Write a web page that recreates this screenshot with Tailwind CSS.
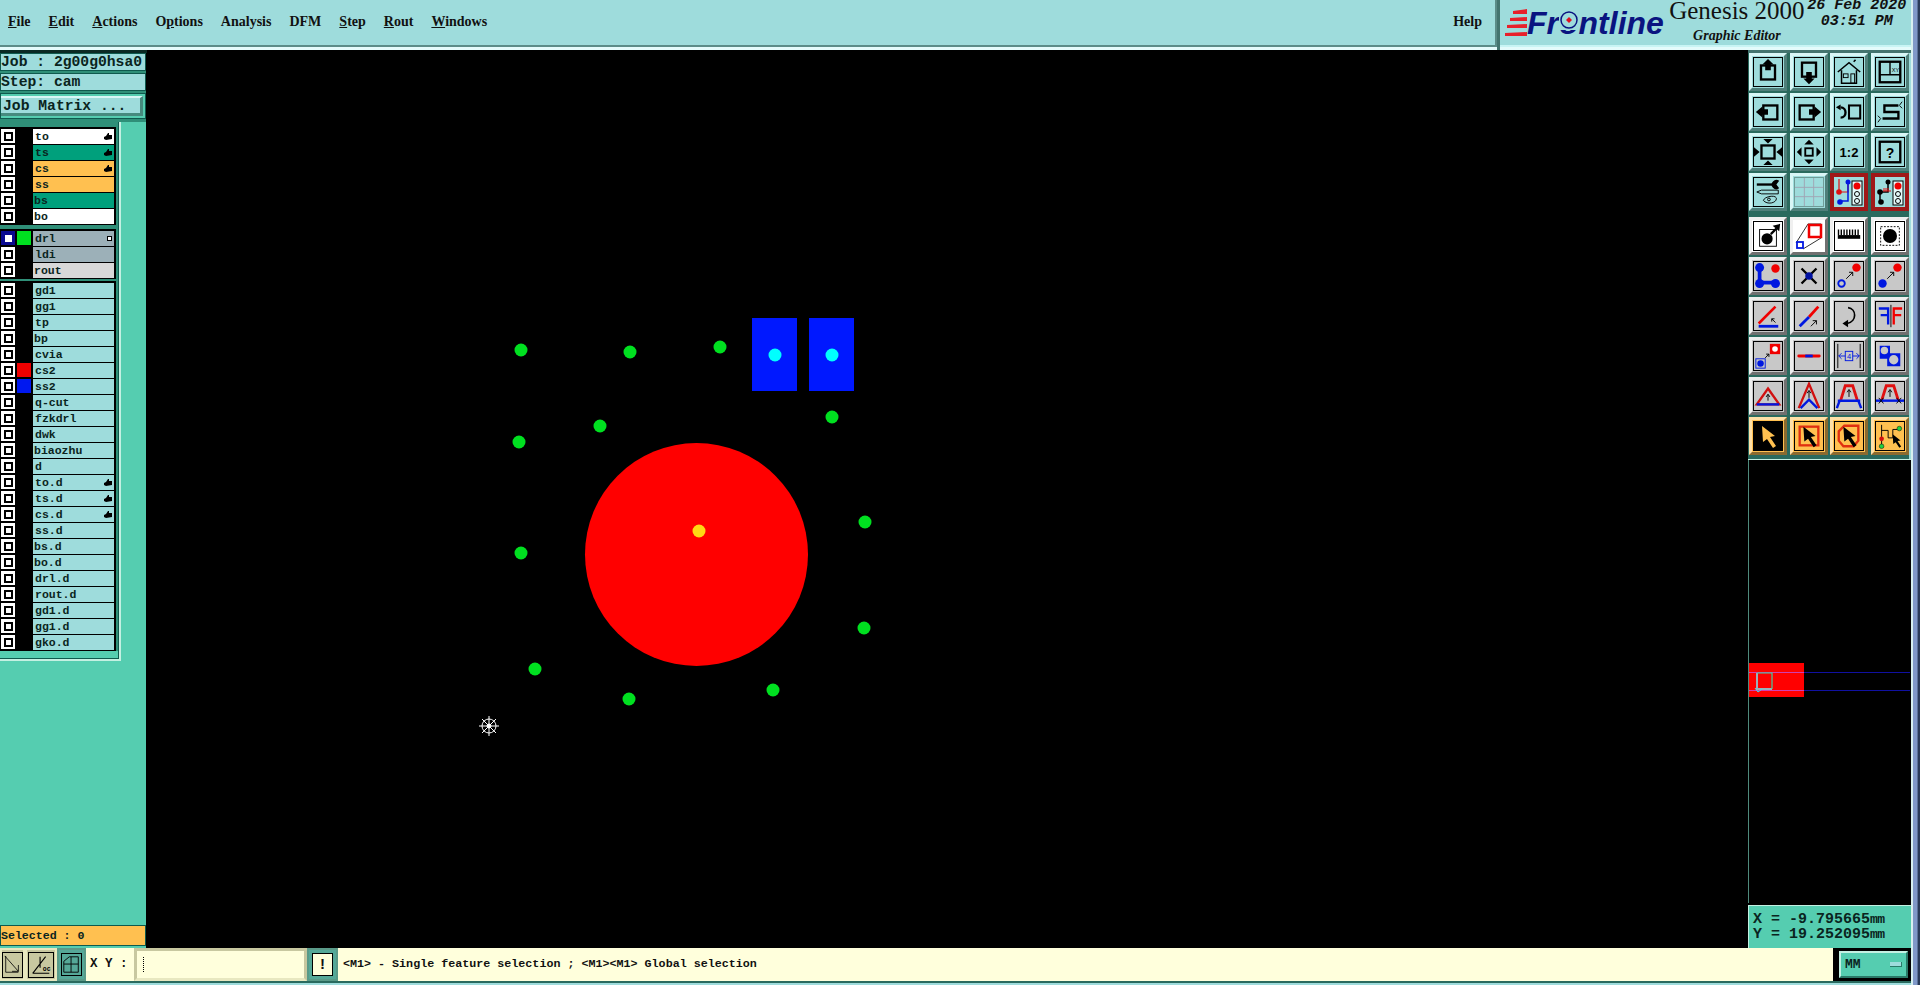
<!DOCTYPE html>
<html lang="en">
<head>
  <meta charset="UTF-8" />
  <title>Genesis 2000 Graphic Editor</title>
  <script src="https://cdn.jsdelivr.net/npm/@tailwindcss/browser@4"></script>
</head>
<body class="bg-black overflow-hidden font-['Liberation_Mono',monospace]">
  <svg class="hidden">
    <defs>
      <path id="hand" d="M1 5 L3 4 L5 1 L6 1 L6 3 L9 3 L9 7 L3 8 L1 7 Z" fill="#000" />
      <path id="pointer" d="M9 5 L22 15 L17 16 L23 25 L20 27 L14 18 L10 21 Z" />
    </defs>
  </svg>

  <div class="flex w-[1920px] h-[985px]">
    <div class="flex flex-col w-[1911px] h-[985px]">

      <!-- top bar -->
      <div class="flex h-[50px] bg-[#e4fbfb]">
        <div class="flex w-[1497px] h-[47px] bg-[#9edcdc] border-b-[2px] border-r-[2px] border-[#5b8c88] items-center justify-between px-2 pb-[2px] font-['Liberation_Serif',serif] font-bold text-[14px] text-[#111]">
          <div class="flex gap-[18px]">
            <span><span class="underline">F</span>ile</span>
            <span><span class="underline">E</span>dit</span>
            <span><span class="underline">A</span>ctions</span>
            <span>O<span class="underline">p</span>tions</span>
            <span>Analysis</span>
            <span>DFM</span>
            <span><span class="underline">S</span>tep</span>
            <span><span class="underline">R</span>out</span>
            <span><span class="underline">W</span>indows</span>
          </div>
          <span class="mr-[5px]">Help</span>
        </div>
        <div class="flex w-[3px] h-[50px] bg-[#43746f]"></div>
        <div class="flex flex-1 h-[47px] bg-[#9edcdc] pl-[5px] border-b-[2px] border-[#c8f4f4]">
          <svg class="w-[22px] h-[34px] mt-[8px]" viewBox="0 0 22 34">
            <path d="M22 1 L8 3 L8 6 L22 6 Z M22 9 L5 10 L5 13 L22 13 Z M22 16 L2 17 L2 20 L22 20 Z M22 24 L0 25 L0 28 L22 28 Z" fill="#e8202a" />
          </svg>
          <span class="font-['Liberation_Sans',sans-serif] font-bold italic text-[32px] leading-[47px] text-[#0a1480] relative">Fr<span class="relative">o<svg class="absolute left-[0px] top-[5px] w-[20px] h-[20px]" viewBox="0 0 20 20"><rect width="20" height="20" fill="#9edcdc" /><circle cx="10" cy="10" r="8" fill="none" stroke="#0a1480" stroke-width="1.5" /><path d="M10 7 L13 10 L10 13 L7 10 Z" fill="#e01020" /></svg></span>ntline</span>
          <div class="flex flex-col items-center w-[140px] ml-[3px] font-['Liberation_Serif',serif] text-[#111]">
            <span class="text-[25px] leading-[22px] whitespace-nowrap">Genesis 2000</span>
            <span class="text-[14px] leading-[18px] mt-[5px] font-bold italic">Graphic Editor</span>
          </div>
          <div class="flex flex-col items-center w-[100px] text-[15px] leading-[16px] font-bold italic text-[#111] mt-[-2px]">
            <span class="whitespace-nowrap">26 Feb 2020</span>
            <span>03:51 PM</span>
          </div>
        </div>
      </div>

      <div class="flex h-[898px]">
        <!-- left column -->
        <div class="flex flex-col w-[147px] h-[898px] bg-black text-[#0a2420]">
          <div class="h-[3px] bg-[#0a2a24]"></div>
          <div class="h-[18px] w-[146px] bg-[#9edcdc] border border-[#0f5a4e] font-bold text-[14.7px] leading-[16px] whitespace-nowrap overflow-hidden">Job : 2g00g0hsa0</div>
          <div class="h-[2px] w-[146px] bg-[#2f8f78]"></div>
          <div class="h-[18px] w-[146px] bg-[#9edcdc] border border-[#0f5a4e] font-bold text-[14.7px] leading-[16px] whitespace-nowrap overflow-hidden">Step: cam</div>
          <div class="h-[2px] w-[146px] bg-[#2f8f78]"></div>
          <div class="flex h-[26px] w-[146px] bg-[#55cdb0] border border-[#0f5a4e] pt-[2px] pr-[2px] pb-[2px]">
            <div class="w-[143px] h-[20px] bg-[#9edcdc] border-t-[2px] border-r-[3px] border-b-[3px] border-t-[#d8f6f6] border-r-[#468a7e] border-b-[#468a7e] font-bold text-[14.7px] leading-[16px] pl-[2px] whitespace-nowrap">Job Matrix ...</div>
          </div>
          <div class="h-[3px] w-[146px] bg-[#2f8f78]"></div>

          <div class="flex w-[146px] h-[539px] bg-[#55cdb0]">
            <div class="w-[121px] h-[539px] border-r-[2px] border-b-[2px] border-[#c4f0e2]">
              <div class="flex flex-col w-[119px] h-[537px] bg-[#2f8f78] pt-[5px] border-r-[1px] border-b-[1px] border-[#0f5a4e]">
                <div class="flex flex-col w-[116px] bg-black pt-[2px]">
                  <div class="flex h-[16px]"><div class="flex items-center justify-center w-[14px] h-[14px] ml-[1px] mr-[18px] bg-white"><div class="w-[9px] h-[9px] border-2 border-black"></div></div><div class="flex items-center justify-between w-[81px] h-[15px] bg-white pl-[2px] pr-[2px] font-bold text-[11.5px] leading-[15px]">to<svg class="w-[9px] h-[9px]"><use href="#hand" /></svg></div></div>
                  <div class="flex h-[16px]"><div class="flex items-center justify-center w-[14px] h-[14px] ml-[1px] mr-[18px] bg-white"><div class="w-[9px] h-[9px] border-2 border-black"></div></div><div class="flex items-center justify-between w-[81px] h-[15px] bg-[#00a07c] pl-[2px] pr-[2px] font-bold text-[11.5px] leading-[15px]">ts<svg class="w-[9px] h-[9px]"><use href="#hand" /></svg></div></div>
                  <div class="flex h-[16px]"><div class="flex items-center justify-center w-[14px] h-[14px] ml-[1px] mr-[18px] bg-white"><div class="w-[9px] h-[9px] border-2 border-black"></div></div><div class="flex items-center justify-between w-[81px] h-[15px] bg-[#ffc050] pl-[2px] pr-[2px] font-bold text-[11.5px] leading-[15px]">cs<svg class="w-[9px] h-[9px]"><use href="#hand" /></svg></div></div>
                  <div class="flex h-[16px]"><div class="flex items-center justify-center w-[14px] h-[14px] ml-[1px] mr-[18px] bg-white"><div class="w-[9px] h-[9px] border-2 border-black"></div></div><div class="w-[81px] h-[15px] bg-[#ffc050] pl-[2px] font-bold text-[11.5px] leading-[15px]">ss</div></div>
                  <div class="flex h-[16px]"><div class="flex items-center justify-center w-[14px] h-[14px] ml-[1px] mr-[18px] bg-white"><div class="w-[9px] h-[9px] border-2 border-black"></div></div><div class="w-[81px] h-[15px] bg-[#00a07c] pl-[1px] font-bold text-[11.5px] leading-[15px]">bs</div></div>
                  <div class="flex h-[16px]"><div class="flex items-center justify-center w-[14px] h-[14px] ml-[1px] mr-[18px] bg-white"><div class="w-[9px] h-[9px] border-2 border-black"></div></div><div class="w-[81px] h-[15px] bg-white pl-[1px] font-bold text-[11.5px] leading-[15px]">bo</div></div>
                </div>
                <div class="h-[4px]"></div>
                <div class="flex flex-col w-[116px] bg-black pt-[2px]">
                  <div class="flex h-[16px]"><div class="flex items-center justify-center w-[14px] h-[14px] ml-[1px] bg-[#0a0a90]"><div class="w-[7px] h-[7px] bg-white"></div></div><div class="w-[14px] h-[14px] ml-[2px] mr-[2px] bg-[#00e020]"></div><div class="flex items-center justify-between w-[81px] h-[15px] bg-[#9cb0b8] pl-[2px] pr-[2px] font-bold text-[11.5px] leading-[15px]">drl<div class="w-[5px] h-[5px] bg-white border border-black"></div></div></div>
                  <div class="flex h-[16px]"><div class="flex items-center justify-center w-[14px] h-[14px] ml-[1px] mr-[18px] bg-white"><div class="w-[9px] h-[9px] border-2 border-black"></div></div><div class="w-[81px] h-[15px] bg-[#9cb0b8] pl-[2px] font-bold text-[11.5px] leading-[15px]">ldi</div></div>
                  <div class="flex h-[16px]"><div class="flex items-center justify-center w-[14px] h-[14px] ml-[1px] mr-[18px] bg-white"><div class="w-[9px] h-[9px] border-2 border-black"></div></div><div class="w-[81px] h-[15px] bg-[#d8d8d8] pl-[1px] font-bold text-[11.5px] leading-[15px]">rout</div></div>
                </div>
                <div class="h-[2px]"></div>
                <div class="flex flex-col w-[116px] bg-black pt-[2px]">
                  <div class="flex h-[16px]"><div class="flex items-center justify-center w-[14px] h-[14px] ml-[1px] mr-[18px] bg-white"><div class="w-[9px] h-[9px] border-2 border-black"></div></div><div class="w-[81px] h-[15px] bg-[#9edcdc] pl-[2px] font-bold text-[11.5px] leading-[15px]">gd1</div></div>
                  <div class="flex h-[16px]"><div class="flex items-center justify-center w-[14px] h-[14px] ml-[1px] mr-[18px] bg-white"><div class="w-[9px] h-[9px] border-2 border-black"></div></div><div class="w-[81px] h-[15px] bg-[#9edcdc] pl-[2px] font-bold text-[11.5px] leading-[15px]">gg1</div></div>
                  <div class="flex h-[16px]"><div class="flex items-center justify-center w-[14px] h-[14px] ml-[1px] mr-[18px] bg-white"><div class="w-[9px] h-[9px] border-2 border-black"></div></div><div class="w-[81px] h-[15px] bg-[#9edcdc] pl-[2px] font-bold text-[11.5px] leading-[15px]">tp</div></div>
                  <div class="flex h-[16px]"><div class="flex items-center justify-center w-[14px] h-[14px] ml-[1px] mr-[18px] bg-white"><div class="w-[9px] h-[9px] border-2 border-black"></div></div><div class="w-[81px] h-[15px] bg-[#9edcdc] pl-[1px] font-bold text-[11.5px] leading-[15px]">bp</div></div>
                  <div class="flex h-[16px]"><div class="flex items-center justify-center w-[14px] h-[14px] ml-[1px] mr-[18px] bg-white"><div class="w-[9px] h-[9px] border-2 border-black"></div></div><div class="w-[81px] h-[15px] bg-[#9edcdc] pl-[2px] font-bold text-[11.5px] leading-[15px]">cvia</div></div>
                  <div class="flex h-[16px]"><div class="flex items-center justify-center w-[14px] h-[14px] ml-[1px] bg-white"><div class="w-[9px] h-[9px] border-2 border-black"></div></div><div class="w-[14px] h-[14px] ml-[2px] mr-[2px] bg-[#f00000]"></div><div class="w-[81px] h-[15px] bg-[#9edcdc] pl-[2px] font-bold text-[11.5px] leading-[15px]">cs2</div></div>
                  <div class="flex h-[16px]"><div class="flex items-center justify-center w-[14px] h-[14px] ml-[1px] bg-white"><div class="w-[9px] h-[9px] border-2 border-black"></div></div><div class="w-[14px] h-[14px] ml-[2px] mr-[2px] bg-[#0018f0]"></div><div class="w-[81px] h-[15px] bg-[#9edcdc] pl-[2px] font-bold text-[11.5px] leading-[15px]">ss2</div></div>
                  <div class="flex h-[16px]"><div class="flex items-center justify-center w-[14px] h-[14px] ml-[1px] mr-[18px] bg-white"><div class="w-[9px] h-[9px] border-2 border-black"></div></div><div class="w-[81px] h-[15px] bg-[#9edcdc] pl-[2px] font-bold text-[11.5px] leading-[15px]">q-cut</div></div>
                  <div class="flex h-[16px]"><div class="flex items-center justify-center w-[14px] h-[14px] ml-[1px] mr-[18px] bg-white"><div class="w-[9px] h-[9px] border-2 border-black"></div></div><div class="w-[81px] h-[15px] bg-[#9edcdc] pl-[2px] font-bold text-[11.5px] leading-[15px]">fzkdrl</div></div>
                  <div class="flex h-[16px]"><div class="flex items-center justify-center w-[14px] h-[14px] ml-[1px] mr-[18px] bg-white"><div class="w-[9px] h-[9px] border-2 border-black"></div></div><div class="w-[81px] h-[15px] bg-[#9edcdc] pl-[2px] font-bold text-[11.5px] leading-[15px]">dwk</div></div>
                  <div class="flex h-[16px]"><div class="flex items-center justify-center w-[14px] h-[14px] ml-[1px] mr-[18px] bg-white"><div class="w-[9px] h-[9px] border-2 border-black"></div></div><div class="w-[81px] h-[15px] bg-[#9edcdc] pl-[1px] font-bold text-[11.5px] leading-[15px]">biaozhu</div></div>
                  <div class="flex h-[16px]"><div class="flex items-center justify-center w-[14px] h-[14px] ml-[1px] mr-[18px] bg-white"><div class="w-[9px] h-[9px] border-2 border-black"></div></div><div class="w-[81px] h-[15px] bg-[#9edcdc] pl-[2px] font-bold text-[11.5px] leading-[15px]">d</div></div>
                  <div class="flex h-[16px]"><div class="flex items-center justify-center w-[14px] h-[14px] ml-[1px] mr-[18px] bg-white"><div class="w-[9px] h-[9px] border-2 border-black"></div></div><div class="flex items-center justify-between w-[81px] h-[15px] bg-[#9edcdc] pl-[2px] pr-[2px] font-bold text-[11.5px] leading-[15px]">to.d<svg class="w-[9px] h-[9px]"><use href="#hand" /></svg></div></div>
                  <div class="flex h-[16px]"><div class="flex items-center justify-center w-[14px] h-[14px] ml-[1px] mr-[18px] bg-white"><div class="w-[9px] h-[9px] border-2 border-black"></div></div><div class="flex items-center justify-between w-[81px] h-[15px] bg-[#9edcdc] pl-[2px] pr-[2px] font-bold text-[11.5px] leading-[15px]">ts.d<svg class="w-[9px] h-[9px]"><use href="#hand" /></svg></div></div>
                  <div class="flex h-[16px]"><div class="flex items-center justify-center w-[14px] h-[14px] ml-[1px] mr-[18px] bg-white"><div class="w-[9px] h-[9px] border-2 border-black"></div></div><div class="flex items-center justify-between w-[81px] h-[15px] bg-[#9edcdc] pl-[2px] pr-[2px] font-bold text-[11.5px] leading-[15px]">cs.d<svg class="w-[9px] h-[9px]"><use href="#hand" /></svg></div></div>
                  <div class="flex h-[16px]"><div class="flex items-center justify-center w-[14px] h-[14px] ml-[1px] mr-[18px] bg-white"><div class="w-[9px] h-[9px] border-2 border-black"></div></div><div class="w-[81px] h-[15px] bg-[#9edcdc] pl-[2px] font-bold text-[11.5px] leading-[15px]">ss.d</div></div>
                  <div class="flex h-[16px]"><div class="flex items-center justify-center w-[14px] h-[14px] ml-[1px] mr-[18px] bg-white"><div class="w-[9px] h-[9px] border-2 border-black"></div></div><div class="w-[81px] h-[15px] bg-[#9edcdc] pl-[1px] font-bold text-[11.5px] leading-[15px]">bs.d</div></div>
                  <div class="flex h-[16px]"><div class="flex items-center justify-center w-[14px] h-[14px] ml-[1px] mr-[18px] bg-white"><div class="w-[9px] h-[9px] border-2 border-black"></div></div><div class="w-[81px] h-[15px] bg-[#9edcdc] pl-[1px] font-bold text-[11.5px] leading-[15px]">bo.d</div></div>
                  <div class="flex h-[16px]"><div class="flex items-center justify-center w-[14px] h-[14px] ml-[1px] mr-[18px] bg-white"><div class="w-[9px] h-[9px] border-2 border-black"></div></div><div class="w-[81px] h-[15px] bg-[#9edcdc] pl-[2px] font-bold text-[11.5px] leading-[15px]">drl.d</div></div>
                  <div class="flex h-[16px]"><div class="flex items-center justify-center w-[14px] h-[14px] ml-[1px] mr-[18px] bg-white"><div class="w-[9px] h-[9px] border-2 border-black"></div></div><div class="w-[81px] h-[15px] bg-[#9edcdc] pl-[2px] font-bold text-[11.5px] leading-[15px]">rout.d</div></div>
                  <div class="flex h-[16px]"><div class="flex items-center justify-center w-[14px] h-[14px] ml-[1px] mr-[18px] bg-white"><div class="w-[9px] h-[9px] border-2 border-black"></div></div><div class="w-[81px] h-[15px] bg-[#9edcdc] pl-[2px] font-bold text-[11.5px] leading-[15px]">gd1.d</div></div>
                  <div class="flex h-[16px]"><div class="flex items-center justify-center w-[14px] h-[14px] ml-[1px] mr-[18px] bg-white"><div class="w-[9px] h-[9px] border-2 border-black"></div></div><div class="w-[81px] h-[15px] bg-[#9edcdc] pl-[2px] font-bold text-[11.5px] leading-[15px]">gg1.d</div></div>
                  <div class="flex h-[16px]"><div class="flex items-center justify-center w-[14px] h-[14px] ml-[1px] mr-[18px] bg-white"><div class="w-[9px] h-[9px] border-2 border-black"></div></div><div class="w-[81px] h-[15px] bg-[#9edcdc] pl-[2px] font-bold text-[11.5px] leading-[15px]">gko.d</div></div>
                </div>
                <div class="flex-1 w-[118px] bg-[#55cdb0]"></div>
              </div>
            </div>
          </div>

          <div class="h-[264px] w-[146px] bg-[#55cdb0]"></div>
          <div class="h-[21px] w-[146px] bg-[#ffc050] border-[1px] border-[#0f5a4e] font-bold text-[11.6px] leading-[19px] whitespace-nowrap">Selected : 0</div>
          <div class="h-[2px] w-[146px] bg-[#55cdb0]"></div>
        </div>

        <!-- canvas -->
        <svg class="w-[1600px] h-[898px] bg-black" viewBox="147 50 1600 898">
          <circle cx="696.5" cy="554.5" r="111.5" fill="#ff0000" />
          <circle cx="699" cy="531" r="6.5" fill="#ffd814" />
          <rect x="752" y="318" width="45" height="73" fill="#0018ff" />
          <rect x="809" y="318" width="45" height="73" fill="#0018ff" />
          <circle cx="775" cy="355" r="6.5" fill="#00ffff" />
          <circle cx="832" cy="355" r="6.5" fill="#00ffff" />
          <g fill="#00e020">
            <circle cx="521" cy="350" r="6.5" />
            <circle cx="630" cy="352" r="6.5" />
            <circle cx="720" cy="347" r="6.5" />
            <circle cx="832" cy="417" r="6.5" />
            <circle cx="600" cy="426" r="6.5" />
            <circle cx="519" cy="442" r="6.5" />
            <circle cx="865" cy="522" r="6.5" />
            <circle cx="521" cy="553" r="6.5" />
            <circle cx="864" cy="628" r="6.5" />
            <circle cx="535" cy="669" r="6.5" />
            <circle cx="629" cy="699" r="6.5" />
            <circle cx="773" cy="690" r="6.5" />
          </g>
          <g stroke="#fff" stroke-width="1" fill="none">
            <path d="M489 716 V736 M479 726 H499 M482 719 L496 733 M496 719 L482 733" />
            <circle cx="489" cy="726" r="7" />
            <circle cx="489" cy="726" r="2" fill="#fff" />
          </g>
        </svg>

        <!-- right column -->
        <div class="flex flex-col w-[164px] h-[898px] bg-black pl-[1px]">
          <div class="h-[3px] bg-[#43746f]"></div>
          <div class="grid grid-cols-4 gap-[2px] w-[163px] pl-[1px] pb-[6px] bg-[#2a6a5e] border-r-[2px] border-[#9edcdc]">
            <div class="flex items-center justify-center w-[38px] h-[38px] bg-[#9edcdc] border-[3px] border-t-[#d8f6f6] border-l-[#d8f6f6] border-r-[#4f7f7a] border-b-[#4f7f7a]"><svg class="w-[30px] h-[30px] shrink-0 border border-black" viewBox="0 0 30 30"><rect x="7.5" y="8" width="15" height="15" fill="none" stroke="#000" stroke-width="2.5" /><path d="M15 1 L21 7 L18 7 L18 13 L12 13 L12 7 L9 7 Z" /></svg></div>
            <div class="flex items-center justify-center w-[38px] h-[38px] bg-[#9edcdc] border-[3px] border-t-[#d8f6f6] border-l-[#d8f6f6] border-r-[#4f7f7a] border-b-[#4f7f7a]"><svg class="w-[30px] h-[30px] shrink-0 border border-black" viewBox="0 0 30 30"><rect x="7.5" y="5" width="15" height="15" fill="none" stroke="#000" stroke-width="2.5" /><path d="M15 28 L21 22 L18 22 L18 15 L12 15 L12 22 L9 22 Z" /></svg></div>
            <div class="flex items-center justify-center w-[38px] h-[38px] bg-[#9edcdc] border-[3px] border-t-[#d8f6f6] border-l-[#d8f6f6] border-r-[#4f7f7a] border-b-[#4f7f7a]"><svg class="w-[30px] h-[30px] shrink-0 border border-black" viewBox="0 0 30 30"><path d="M3 15 L15 5 L27 15 M7 13 V27 H23 V13 M20 4 L22 2" fill="none" stroke="#000" stroke-width="1.6" /><rect x="9" y="17" width="5" height="4" fill="none" stroke="#000" /><rect x="17" y="17" width="4" height="10" fill="none" stroke="#000" /></svg></div>
            <div class="flex items-center justify-center w-[38px] h-[38px] bg-[#9edcdc] border-[3px] border-t-[#d8f6f6] border-l-[#d8f6f6] border-r-[#4f7f7a] border-b-[#4f7f7a]"><svg class="w-[30px] h-[30px] shrink-0 border border-black" viewBox="0 0 30 30"><rect x="4" y="4" width="22" height="22" fill="none" stroke="#000" stroke-width="2.5" /><path d="M15 4 V18 M4 18 H26" stroke="#000" stroke-width="1.5" /><text x="17" y="15" font-size="6" font-family="Liberation Sans">XY</text></svg></div>

            <div class="flex items-center justify-center w-[38px] h-[38px] bg-[#9edcdc] border-[3px] border-t-[#d8f6f6] border-l-[#d8f6f6] border-r-[#4f7f7a] border-b-[#4f7f7a]"><svg class="w-[30px] h-[30px] shrink-0 border border-black" viewBox="0 0 30 30"><rect x="10" y="8" width="15" height="15" fill="none" stroke="#000" stroke-width="2.5" /><path d="M2 15 L9 9 L9 12 L15 12 L15 18 L9 18 L9 21 Z" /></svg></div>
            <div class="flex items-center justify-center w-[38px] h-[38px] bg-[#9edcdc] border-[3px] border-t-[#d8f6f6] border-l-[#d8f6f6] border-r-[#4f7f7a] border-b-[#4f7f7a]"><svg class="w-[30px] h-[30px] shrink-0 border border-black" viewBox="0 0 30 30"><rect x="5" y="8" width="15" height="15" fill="none" stroke="#000" stroke-width="2.5" /><path d="M28 15 L21 9 L21 12 L15 12 L15 18 L21 18 L21 21 Z" /></svg></div>
            <div class="flex items-center justify-center w-[38px] h-[38px] bg-[#9edcdc] border-[3px] border-t-[#d8f6f6] border-l-[#d8f6f6] border-r-[#4f7f7a] border-b-[#4f7f7a]"><svg class="w-[30px] h-[30px] shrink-0 border border-black" viewBox="0 0 30 30"><rect x="15" y="8" width="12" height="14" fill="none" stroke="#000" stroke-width="2.2" /><path d="M6 21 C13 21 13 10 6 10" fill="none" stroke="#000" stroke-width="2.5" /><path d="M1 10 L6 7 L6 13 Z" /></svg></div>
            <div class="flex items-center justify-center w-[38px] h-[38px] bg-[#9edcdc] border-[3px] border-t-[#d8f6f6] border-l-[#d8f6f6] border-r-[#4f7f7a] border-b-[#4f7f7a]"><svg class="w-[30px] h-[30px] shrink-0 border border-black" viewBox="0 0 30 30"><path d="M24 8 H9 V15 H24 V22 H7" fill="none" stroke="#000" stroke-width="2.5" /><path d="M28 4 L25 8 L28 11 M2 19 L5 22 L2 26" fill="none" stroke="#000" /></svg></div>

            <div class="flex items-center justify-center w-[38px] h-[38px] bg-[#9edcdc] border-[3px] border-t-[#d8f6f6] border-l-[#d8f6f6] border-r-[#4f7f7a] border-b-[#4f7f7a]"><svg class="w-[30px] h-[30px] shrink-0 border border-black" viewBox="0 0 30 30"><rect x="8" y="8" width="14" height="14" fill="none" stroke="#000" stroke-width="2.5" /><path d="M10 1 H20 L15 6 Z M10 29 H20 L15 24 Z M0 10 L6 15 L0 20 Z M30 10 L24 15 L30 20 Z" /></svg></div>
            <div class="flex items-center justify-center w-[38px] h-[38px] bg-[#9edcdc] border-[3px] border-t-[#d8f6f6] border-l-[#d8f6f6] border-r-[#4f7f7a] border-b-[#4f7f7a]"><svg class="w-[30px] h-[30px] shrink-0 border border-black" viewBox="0 0 30 30"><rect x="11" y="11" width="8" height="8" fill="none" stroke="#000" stroke-width="2" /><path d="M15 2 L20 7 H10 Z M15 28 L20 23 H10 Z M2 15 L7 10 V20 Z M28 15 L23 10 V20 Z" /></svg></div>
            <div class="flex items-center justify-center w-[38px] h-[38px] bg-[#9edcdc] border-[3px] border-t-[#d8f6f6] border-l-[#d8f6f6] border-r-[#4f7f7a] border-b-[#4f7f7a]"><svg class="w-[30px] h-[30px] shrink-0 border border-black" viewBox="0 0 30 30"><text x="15" y="20" font-size="14" font-weight="bold" text-anchor="middle" font-family="Liberation Sans">1:2</text></svg></div>
            <div class="flex items-center justify-center w-[38px] h-[38px] bg-[#9edcdc] border-[3px] border-t-[#d8f6f6] border-l-[#d8f6f6] border-r-[#4f7f7a] border-b-[#4f7f7a]"><svg class="w-[30px] h-[30px] shrink-0 border border-black" viewBox="0 0 30 30"><rect x="4" y="4" width="22" height="22" fill="none" stroke="#000" stroke-width="2.5" /><text x="15" y="21" font-size="15" font-weight="bold" text-anchor="middle" font-family="Liberation Sans">?</text></svg></div>

            <div class="flex items-center justify-center w-[38px] h-[38px] bg-[#9edcdc] border-[3px] border-t-[#d8f6f6] border-l-[#d8f6f6] border-r-[#4f7f7a] border-b-[#4f7f7a]"><svg class="w-[30px] h-[30px] shrink-0 border border-black" viewBox="0 0 30 30"><path d="M3 7 H20" stroke="#000" stroke-width="2.5" /><path d="M27 3 A5 5 0 1 0 27 11 L24 7 Z" /><path d="M3 15 L8 13 H26 V17 H8 Z" fill="none" stroke="#000" /><path d="M10 24 C12 19 24 18 24 22 C24 27 14 29 10 24 Z" fill="none" stroke="#000" /><circle cx="16" cy="23" r="1.5" fill="none" stroke="#000" /></svg></div>
            <div class="flex items-center justify-center w-[38px] h-[38px] bg-[#9edcdc] border-[3px] border-t-[#d8f6f6] border-l-[#d8f6f6] border-r-[#4f7f7a] border-b-[#4f7f7a]"><svg class="w-[30px] h-[30px] shrink-0 border border-[#6f9c98]" viewBox="0 0 30 30"><path d="M10 0 V30 M20 0 V30 M0 10 H30 M0 20 H30" stroke="#a0a4b4" /></svg></div>
            <div class="flex items-center justify-center w-[38px] h-[38px] bg-[#e4fbfb] border-[4px] border-[#a01818]"><svg class="w-[30px] h-[30px] shrink-0 bg-[#9edcdc]" viewBox="0 0 30 30"><path d="M3 15 H14 V4 M5 15 V2" fill="none" stroke="#e01010" stroke-width="1.2" /><path d="M14 6 V24 H6" fill="none" stroke="#0018e0" stroke-width="1.5" /><circle cx="14" cy="5" r="2.5" fill="#0018e0" /><circle cx="5" cy="15" r="2.8" fill="#e01010" /><circle cx="6" cy="25" r="2.8" fill="#0018e0" /><rect x="18" y="4" width="10" height="24" fill="#e4fbfb" stroke="#000" /><circle cx="23" cy="9" r="3.5" fill="#f00000" /><circle cx="23" cy="17" r="2.5" fill="none" stroke="#000" /><circle cx="23" cy="24" r="2.5" fill="none" stroke="#000" /></svg></div>
            <div class="flex items-center justify-center w-[38px] h-[38px] bg-[#e4fbfb] border-[4px] border-[#a01818]"><svg class="w-[30px] h-[30px] shrink-0 bg-[#9edcdc]" viewBox="0 0 30 30"><path d="M13 5 V15 H5 V25" fill="none" stroke="#000" stroke-width="1.5" /><path d="M9 14 V11 M11 14 V11 M13 14 V11 M8 14 H16" stroke="#e01010" /><circle cx="13" cy="5" r="2.5" /><circle cx="5" cy="15" r="2.8" /><circle cx="6" cy="25" r="2.8" /><rect x="18" y="4" width="10" height="24" fill="#e4fbfb" stroke="#000" /><circle cx="23" cy="9" r="3.5" fill="#f00000" /><circle cx="23" cy="17" r="2.5" fill="none" stroke="#000" /><circle cx="23" cy="24" r="2.5" fill="none" stroke="#000" /></svg></div>
          </div>

          <div class="grid grid-cols-4 gap-[2px] w-[163px] pl-[1px] pb-[4px] bg-[#2a6a5e] border-r-[2px] border-[#9edcdc]">
            <div class="flex items-center justify-center w-[38px] h-[38px] bg-white border-[3px] border-t-[#f0f0f0] border-l-[#f0f0f0] border-r-[#707070] border-b-[#707070]"><svg class="w-[30px] h-[30px] shrink-0 border border-black" viewBox="0 0 30 30"><rect x="6" y="8" width="18" height="18" fill="none" stroke="#000" /><circle cx="14" cy="18" r="6" /><path d="M18 13 L24 7" stroke="#000" stroke-width="2.5" /><path d="M28 2 L27 10 L20 4 Z" /></svg></div>
            <div class="flex items-center justify-center w-[38px] h-[38px] bg-white border-[3px] border-t-[#f0f0f0] border-l-[#f0f0f0] border-r-[#707070] border-b-[#707070]"><svg class="w-[30px] h-[30px] shrink-0" viewBox="0 0 30 30"><path d="M2 22 L14 3 H27 M9 28 L27 17" fill="none" stroke="#000" stroke-width="0.8" /><rect x="15" y="4" width="12" height="12" fill="#fff" stroke="#f00000" stroke-width="2.5" /><rect x="3" y="21" width="6" height="6" fill="#fff" stroke="#0018e0" stroke-width="1.8" /></svg></div>
            <div class="flex items-center justify-center w-[38px] h-[38px] bg-white border-[3px] border-t-[#f0f0f0] border-l-[#f0f0f0] border-r-[#707070] border-b-[#707070]"><svg class="w-[30px] h-[30px] shrink-0 border border-black" viewBox="0 0 30 30"><rect x="3" y="14" width="24" height="4" /><path d="M3 11 H27" stroke="#000" stroke-width="6" stroke-dasharray="1.5 1.5" /></svg></div>
            <div class="flex items-center justify-center w-[38px] h-[38px] bg-white border-[3px] border-t-[#f0f0f0] border-l-[#f0f0f0] border-r-[#707070] border-b-[#707070]"><svg class="w-[30px] h-[30px] shrink-0 border border-black" viewBox="0 0 30 30"><rect x="5" y="5" width="20" height="20" fill="none" stroke="#000" stroke-dasharray="2 1.5" /><circle cx="15" cy="15" r="7.5" /></svg></div>

            <div class="flex items-center justify-center w-[38px] h-[38px] bg-[#c8c8c8] border-[3px] border-t-[#efefef] border-l-[#efefef] border-r-[#707070] border-b-[#707070]"><svg class="w-[30px] h-[30px] shrink-0 border border-black" viewBox="0 0 30 30"><path d="M6 6 V22 H24" fill="none" stroke="#0018e0" stroke-width="4" /><circle cx="6" cy="6" r="4.8" fill="#0018e0" /><circle cx="6" cy="23" r="4.8" fill="#0018e0" /><circle cx="23" cy="23" r="4.8" fill="#0018e0" /><circle cx="23" cy="7" r="4.5" fill="#f00000" /></svg></div>
            <div class="flex items-center justify-center w-[38px] h-[38px] bg-[#c8c8c8] border-[3px] border-t-[#efefef] border-l-[#efefef] border-r-[#707070] border-b-[#707070]"><svg class="w-[30px] h-[30px] shrink-0 border border-black" viewBox="0 0 30 30"><path d="M7 7 L23 23 M23 7 L7 23" stroke="#000" stroke-width="2.5" /><circle cx="15" cy="15" r="4" fill="#0010a0" /></svg></div>
            <div class="flex items-center justify-center w-[38px] h-[38px] bg-[#c8c8c8] border-[3px] border-t-[#efefef] border-l-[#efefef] border-r-[#707070] border-b-[#707070]"><svg class="w-[30px] h-[30px] shrink-0 border border-black" viewBox="0 0 30 30"><circle cx="7" cy="23" r="3.5" fill="none" stroke="#0018e0" stroke-width="2" /><path d="M12 18 L19 11 M15 11 H19 V15" fill="none" stroke="#000" /><circle cx="23" cy="6" r="4.5" fill="#f00000" /></svg></div>
            <div class="flex items-center justify-center w-[38px] h-[38px] bg-[#c8c8c8] border-[3px] border-t-[#efefef] border-l-[#efefef] border-r-[#707070] border-b-[#707070]"><svg class="w-[30px] h-[30px] shrink-0 border border-black" viewBox="0 0 30 30"><circle cx="7" cy="23" r="4.5" fill="#0018e0" /><path d="M12 18 L19 11 M15 11 H19 V15" fill="none" stroke="#000" /><circle cx="23" cy="6" r="4.5" fill="#f00000" /></svg></div>

            <div class="flex items-center justify-center w-[38px] h-[38px] bg-[#c8c8c8] border-[3px] border-t-[#efefef] border-l-[#efefef] border-r-[#707070] border-b-[#707070]"><svg class="w-[30px] h-[30px] shrink-0 border border-black" viewBox="0 0 30 30"><path d="M5 23 L23 5" stroke="#f00000" stroke-width="2.8" /><path d="M5 26 H26" stroke="#0018e0" stroke-width="3" /><path d="M19 18 L23 22 M19 18 H22 M19 18 V21" stroke="#000" fill="none" /></svg></div>
            <div class="flex items-center justify-center w-[38px] h-[38px] bg-[#c8c8c8] border-[3px] border-t-[#efefef] border-l-[#efefef] border-r-[#707070] border-b-[#707070]"><svg class="w-[30px] h-[30px] shrink-0 border border-black" viewBox="0 0 30 30"><path d="M15 16 L25 5" stroke="#f00000" stroke-width="3" /><path d="M5 26 L15 16" stroke="#0018e0" stroke-width="3" /><path d="M17 26 L23 20 M19 20 H23 V24" stroke="#000" fill="none" /></svg></div>
            <div class="flex items-center justify-center w-[38px] h-[38px] bg-[#c8c8c8] border-[3px] border-t-[#efefef] border-l-[#efefef] border-r-[#707070] border-b-[#707070]"><svg class="w-[30px] h-[30px] shrink-0 border border-black" viewBox="0 0 30 30"><path d="M14 6 C23 7 24 21 13 23" fill="none" stroke="#000" stroke-width="1.8" /><path d="M8 23 L14 19 L14 27 Z" /></svg></div>
            <div class="flex items-center justify-center w-[38px] h-[38px] bg-[#c8c8c8] border-[3px] border-t-[#efefef] border-l-[#efefef] border-r-[#707070] border-b-[#707070]"><svg class="w-[30px] h-[30px] shrink-0 border border-black" viewBox="0 0 30 30"><path d="M3 7 H13 V24 M5 14 H13" fill="none" stroke="#0018e0" stroke-width="2.5" /><path d="M16 3 V27" stroke="#000" /><path d="M28 7 H19 V24 M19 14 H27" fill="none" stroke="#f00000" stroke-width="2.5" /></svg></div>

            <div class="flex items-center justify-center w-[38px] h-[38px] bg-[#c8c8c8] border-[3px] border-t-[#efefef] border-l-[#efefef] border-r-[#707070] border-b-[#707070]"><svg class="w-[30px] h-[30px] shrink-0 border border-black" viewBox="0 0 30 30"><rect x="17" y="2" width="11" height="11" fill="#f00000" /><circle cx="22.5" cy="7.5" r="3" fill="#fff" /><rect x="2" y="18" width="10" height="10" fill="#c8c8c8" stroke="#0018e0" /><circle cx="7" cy="23" r="3.5" fill="#0018e0" /><path d="M12 17 L16 13 M13 13 H16 V16" stroke="#000" fill="none" /></svg></div>
            <div class="flex items-center justify-center w-[38px] h-[38px] bg-[#c8c8c8] border-[3px] border-t-[#efefef] border-l-[#efefef] border-r-[#707070] border-b-[#707070]"><svg class="w-[30px] h-[30px] shrink-0 border border-black" viewBox="0 0 30 30"><path d="M4 15 H26" stroke="#f00000" stroke-width="3" stroke-linecap="round" /><path d="M11 15 H19" stroke="#0018e0" stroke-width="3" /></svg></div>
            <div class="flex items-center justify-center w-[38px] h-[38px] bg-[#c8c8c8] border-[3px] border-t-[#efefef] border-l-[#efefef] border-r-[#707070] border-b-[#707070]"><svg class="w-[30px] h-[30px] shrink-0 border border-black" viewBox="0 0 30 30"><path d="M3 2 V28 M27 2 V28" stroke="#000" /><rect x="11" y="10" width="8" height="10" fill="none" stroke="#0018e0" /><path d="M4 15 H11 M19 15 H26 M4 15 L7 12 M4 15 L7 18 M26 15 L23 12 M26 15 L23 18" stroke="#0018e0" fill="none" /><text x="15" y="18.5" font-size="8" text-anchor="middle" fill="#0018e0" font-family="Liberation Sans">4</text></svg></div>
            <div class="flex items-center justify-center w-[38px] h-[38px] bg-[#c8c8c8] border-[3px] border-t-[#efefef] border-l-[#efefef] border-r-[#707070] border-b-[#707070]"><svg class="w-[30px] h-[30px] shrink-0 border border-black" viewBox="0 0 30 30"><path d="M4 4 H15 V12 H26 V26 H12 V18 H4 Z" fill="#0018e0" /><circle cx="9" cy="9" r="4" fill="#c8c8c8" /><circle cx="19" cy="19" r="5" fill="#c8c8c8" /></svg></div>

            <div class="flex items-center justify-center w-[38px] h-[38px] bg-[#c8c8c8] border-[3px] border-t-[#efefef] border-l-[#efefef] border-r-[#707070] border-b-[#707070]"><svg class="w-[30px] h-[30px] shrink-0 border border-black" viewBox="0 0 30 30"><path d="M15 7 L27 24 H3 Z" fill="none" stroke="#d01010" stroke-width="2.5" /><path d="M3 24 H27" stroke="#0018e0" stroke-width="2.5" /><path d="M15 20 V14 M13 16 L15 13 L17 16" stroke="#000" fill="none" /></svg></div>
            <div class="flex items-center justify-center w-[38px] h-[38px] bg-[#c8c8c8] border-[3px] border-t-[#efefef] border-l-[#efefef] border-r-[#707070] border-b-[#707070]"><svg class="w-[30px] h-[30px] shrink-0 border border-black" viewBox="0 0 30 30"><path d="M4 28 L15 2 L26 28" fill="none" stroke="#d01010" stroke-width="2.5" /><path d="M6 28 L15 19 L24 28" fill="none" stroke="#0018e0" stroke-width="2.5" /><path d="M15 17 V10 M13 12 L15 9 L17 12" stroke="#000" fill="none" /></svg></div>
            <div class="flex items-center justify-center w-[38px] h-[38px] bg-[#c8c8c8] border-[3px] border-t-[#efefef] border-l-[#efefef] border-r-[#707070] border-b-[#707070]"><svg class="w-[30px] h-[30px] shrink-0 border border-black" viewBox="0 0 30 30"><path d="M6 20 L11 4 H19 L24 20" fill="none" stroke="#e01010" stroke-width="3" /><path d="M3 20 H27 M5 20 L2 28 M25 20 L28 28" stroke="#0018e0" stroke-width="2.6" fill="none" /><path d="M15 16 V9 M13 11 L15 8 L17 11" stroke="#000" fill="none" /></svg></div>
            <div class="flex items-center justify-center w-[38px] h-[38px] bg-[#c8c8c8] border-[3px] border-t-[#efefef] border-l-[#efefef] border-r-[#707070] border-b-[#707070]"><svg class="w-[30px] h-[30px] shrink-0 border border-black" viewBox="0 0 30 30"><path d="M6 20 L11 4 H19 L24 20" fill="none" stroke="#e01010" stroke-width="3" /><path d="M0 20 H30" stroke="#0018e0" stroke-width="2.6" /><path d="M15 16 V9 M13 11 L15 8 L17 11 M3 17 L8 23 M8 17 L3 23 M22 17 L27 23 M27 17 L22 23" stroke="#000" fill="none" /></svg></div>

            <div class="flex items-center justify-center w-[38px] h-[38px] bg-[#ffc050] border-[3px] border-t-[#ffe0a8] border-l-[#ffe0a8] border-r-[#8a6a30] border-b-[#8a6a30]"><svg class="w-[30px] h-[30px] shrink-0 bg-black" viewBox="0 0 30 30" fill="#ffc050"><use href="#pointer" /></svg></div>
            <div class="flex items-center justify-center w-[38px] h-[38px] bg-[#ffc050] border-[3px] border-t-[#ffe0a8] border-l-[#ffe0a8] border-r-[#8a6a30] border-b-[#8a6a30]"><svg class="w-[30px] h-[30px] shrink-0 border border-black" viewBox="0 0 30 30"><rect x="5" y="5" width="20" height="20" fill="none" stroke="#e03010" stroke-width="2.5" /><use href="#pointer" /></svg></div>
            <div class="flex items-center justify-center w-[38px] h-[38px] bg-[#ffc050] border-[3px] border-t-[#ffe0a8] border-l-[#ffe0a8] border-r-[#8a6a30] border-b-[#8a6a30]"><svg class="w-[30px] h-[30px] shrink-0 border border-black" viewBox="0 0 30 30"><path d="M10 4 H25 V20 L20 26 H9 L4 20 V10 Z" fill="none" stroke="#e03010" stroke-width="2.5" /><use href="#pointer" /></svg></div>
            <div class="flex items-center justify-center w-[38px] h-[38px] bg-[#ffc050] border-[3px] border-t-[#ffe0a8] border-l-[#ffe0a8] border-r-[#8a6a30] border-b-[#8a6a30]"><svg class="w-[30px] h-[30px] shrink-0 border border-black" viewBox="0 0 30 30"><path d="M6 3 V16 M6 20 V25 M6 9 H13 V17 H18 V8 H23" fill="none" stroke="#000" /><circle cx="6" cy="18" r="2.5" fill="#d01010" /><circle cx="6" cy="26" r="2.5" fill="#20d040" stroke="#000" stroke-width="0.5" /><circle cx="25" cy="7" r="2.5" fill="#20d040" stroke="#000" stroke-width="0.5" /><use href="#pointer" transform="translate(12 10) scale(0.65)" /></svg></div>
          </div>

          <div class="h-[1px] bg-[#c4f0e2] w-[163px]"></div>
          <!-- minimap -->
          <svg class="w-[162px] h-[443px] border-l-[1px] border-[#4f8a7c] bg-black" viewBox="0 0 161 443">
            <rect x="0" y="203" width="55" height="34" fill="#ff0000" />
            <path d="M55 212.5 H161 M55 230.5 H161" stroke="#1010a0" />
            <path d="M0 212.5 H55 M0 230.5 H55" stroke="#d040b0" />
            <path d="M8 213 V229 H23" fill="none" stroke="#9cb0b8" stroke-width="2" />
            <path d="M8 213 H23 V229" fill="none" stroke="#40d0a0" stroke-width="1.2" />
            <path d="M6 228 L9 232 L13 229" fill="none" stroke="#40e0f0" />
          </svg>
          <div class="h-[2px] bg-black"></div>
          <div class="flex flex-col justify-center h-[43px] w-[163px] bg-[#55cdb0] border-t-[1px] border-l-[1px] border-[#c4f0e2] pl-[4px] font-bold text-[15px] leading-[15px] text-[#0a2420] whitespace-nowrap">
            <span>X = -9.795665<span class="text-[13px] tracking-[-0.5px]">mm</span></span>
            <span>Y = 19.252095<span class="text-[13px] tracking-[-0.5px]">mm</span></span>
          </div>
        </div>
      </div>

      <!-- status bar -->
      <div class="flex h-[37px] bg-black">
        <div class="flex flex-col w-[1911px]">
          <div class="flex h-[33px] bg-[#ffffdc] text-[#111] font-bold">
            <div class="flex items-center justify-center w-[25px] h-[33px] bg-[#c8c8a0] border-[2px] border-[#e8e8c0]"><svg class="w-[21px] h-[26px] shrink-0 border border-black" viewBox="0 0 21 26"><path d="M2 3 L17 20 M17 13 V20 H10 M3 3 V21 H17" fill="none" stroke="#000" stroke-width="0.9" /></svg></div>
            <div class="flex items-center justify-center w-[32px] h-[33px] bg-[#c8c8a0] border-[2px] border-[#e8e8c0]"><svg class="w-[26px] h-[26px] shrink-0 border border-black" viewBox="0 0 26 26"><path d="M4 22 L18 4 M4 22 H22 M12 4 V16" fill="none" stroke="#000" stroke-width="1.2" /><text x="15" y="20" font-size="7">oc</text></svg></div>
            <div class="flex items-center justify-center w-[29px] h-[33px] bg-[#55a898] border-[2px] border-[#5a9a88]"><svg class="w-[21px] h-[23px] shrink-0 border border-black" viewBox="0 0 21 23"><path d="M2 20 V8 L8 3 H18 V20 Z M10 3 V20 M2 11 H18" fill="none" stroke="#000" /></svg></div>
            <div class="flex items-center w-[48px] pl-[4px] text-[12.5px] whitespace-nowrap">X Y :</div>
            <div class="flex items-center w-[173px] h-[33px] bg-[#ffffdc] border-[3px] border-t-[#c8c8a0] border-l-[#c8c8a0] border-r-[#c8c8a0] border-b-[#e8e8c0] pl-[6px]">
              <div class="w-[1px] h-[15px] border-l border-dotted border-black"></div>
            </div>
            <div class="flex items-center justify-center w-[31px] h-[33px] bg-[#55a898] border-[2px] border-[#5a9a88]"><div class="flex items-center justify-center w-[21px] h-[23px] bg-[#ffffdc] border border-black font-['Liberation_Sans',sans-serif] text-[15px]">!</div></div>
            <div class="flex items-center flex-1 pl-[5px] text-[11.7px] whitespace-nowrap">&lt;M1&gt; - Single feature selection ; &lt;M1&gt;&lt;M1&gt; Global selection</div>
            <div class="flex items-center justify-end w-[78px] h-[33px] bg-black pr-[3px]">
              <div class="flex items-center justify-between w-[69px] h-[27px] bg-[#55cdb0] border-[2px] border-t-[#c4f0e2] border-l-[#c4f0e2] border-r-[#2a7a68] border-b-[#2a7a68] px-[4px] text-[13px] text-[#0a2420]">MM<div class="w-[12px] h-[5px] bg-[#9edcdc] border-b border-r border-[#2a7a68]"></div></div>
            </div>
          </div>
          <div class="h-[2px] bg-[#2a6a5e]"></div>
          <div class="h-[2px] bg-[#9edcdc]"></div>
        </div>
      </div>
    </div>

    <!-- window edge -->
    <div class="flex w-[9px] h-[985px] bg-[#d0dcf0]">
      <div class="w-[2px] bg-[#d8f0f0]"></div>
      <div class="w-[4px] bg-[#8098c8]"></div>
      <div class="w-[1px] bg-[#5a7098]"></div>
      <div class="w-[2px] bg-[#2a3a58]"></div>
    </div>
  </div>
</body>
</html>
